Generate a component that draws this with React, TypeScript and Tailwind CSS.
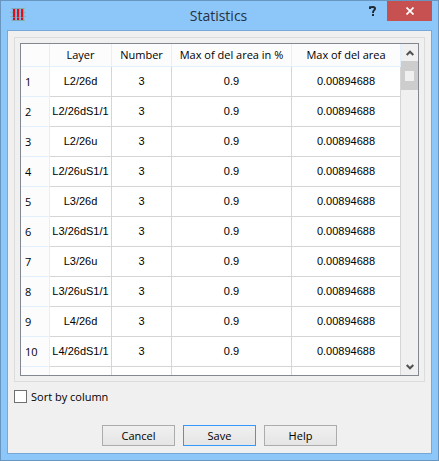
import { useState } from "react";

const columns = ["Layer", "Number", "Max of del area in %", "Max of del area"];

const layers = [
  "L2/26d",
  "L2/26dS1/1",
  "L2/26u",
  "L2/26uS1/1",
  "L3/26d",
  "L3/26dS1/1",
  "L3/26u",
  "L3/26uS1/1",
  "L4/26d",
  "L4/26dS1/1",
];

const rows = layers.map((layer) => ({
  layer,
  number: "3",
  percent: "0.9",
  area: "0.00894688",
}));

const cell = "border-r border-b border-[#d5d5d5] p-0 pb-px text-center";
const headCell = "border-r border-b border-[#e2effc] bg-[#fcfcfd] p-0 font-normal";
const button =
  "h-[21px] w-[73px] border bg-linear-to-b from-[#f0f0f0] to-[#e5e5e5] text-center leading-4";

function AppIcon() {
  return (
    <svg className="h-4 w-4" viewBox="0 0 16 16" aria-hidden="true">
      <path d="M2 1h12v13H2z" fill="#7fa6cf" opacity=".55" />
      <path d="M1 1.5h14M0 5.5h16M0 9.5h16M1 13.5h14" stroke="#7ea88f" opacity=".6" />
      <path d="M1.5 0v15M14.5 0v15" stroke="#8fc0c0" opacity=".6" />
      <path d="M5 2h1v11H5zM9 2h1v11H9zM13 2h1v11h-1z" fill="#8494bd" opacity=".8" />
      <path d="M3 2h2v8H3zM7 2h2v8H7zM11 2h2v8h-2z" fill="#dc101c" />
      <path d="M3 10h2v1H3zM7 10h2v1H7zM11 10h2v1h-2z" fill="#a8667f" />
      <path d="M3 11h2v2H3zM7 11h2v2H7zM11 11h2v2h-2z" fill="#c8101f" />
    </svg>
  );
}

function TitleBar() {
  return (
    <header className="flex h-[29px] shrink-0 items-start justify-between pr-[6px] pl-[9px]">
      <div className="flex w-[68px] pt-[6px]">
        <AppIcon />
      </div>
      <h1 className="text-[14px] leading-[29px] text-[#26323c]">Statistics</h1>
      <div className="flex">
        <button type="button" aria-label="What's this?" className="flex h-5 w-7 items-center justify-center pl-px">
          <svg className="h-3 w-2" viewBox="0 0 8 12" fill="none" aria-hidden="true">
            <path d="M1 4V2.2Q2 2 4 2Q6 2 6 3.6Q6 4.6 5 5.3Q4 6 4 8" stroke="#1f2a33" strokeWidth="2" />
            <path d="M3 9h2v2H3z" fill="#1f2a33" />
          </svg>
        </button>
        <button type="button" aria-label="Close" className="flex h-5 w-[45px] items-center justify-center bg-[#c75050] pl-px">
          <svg className="h-2 w-2" viewBox="0 0 8 8" aria-hidden="true">
            <path d="M.5.5l7 7M7.5.5l-7 7" stroke="#fff" strokeWidth="1.7" />
          </svg>
        </button>
      </div>
    </header>
  );
}

function ScrollBar() {
  return (
    <div className="flex w-[17px] shrink-0 flex-col bg-[#f0f0f0]">
      <button type="button" aria-label="Scroll up" className="flex h-[17px] items-center justify-center">
        <svg className="h-[6px] w-2" viewBox="0 0 8 6" fill="none" aria-hidden="true">
          <path d="M.7 5L4 1.7L7.3 5" stroke="#505050" strokeWidth="2" />
        </svg>
      </button>
      <div className="flex h-[29px] items-center justify-center bg-[#cdcdcd]">
        <span className="h-[10px] w-[9px] bg-[#f0f0f0]" />
      </div>
      <button type="button" aria-label="Scroll down" className="mt-auto flex h-[17px] items-center justify-center">
        <svg className="h-[6px] w-2" viewBox="0 0 8 6" fill="none" aria-hidden="true">
          <path d="M.7 1L4 4.3L7.3 1" stroke="#505050" strokeWidth="2" />
        </svg>
      </button>
    </div>
  );
}

function StatisticsTable() {
  return (
    <table className="w-full table-fixed border-separate border-spacing-0">
      <colgroup>
        <col className="w-[29px]" />
        <col className="w-[62px]" />
        <col className="w-[60px]" />
        <col className="w-[120px]" />
        <col />
      </colgroup>
      <thead>
        <tr className="h-[23px]">
          <td className={headCell} />
          {columns.map((name) => (
            <th key={name} scope="col" className={`${headCell} whitespace-nowrap`}>
              {name}
            </th>
          ))}
        </tr>
      </thead>
      <tbody className="font-['Liberation_Sans',Arial,sans-serif]">
        {rows.map((row, i) => (
          <tr key={row.layer} className="h-[30px]">
            <th scope="row" className={`${headCell} pl-1 text-left font-['Open_Sans',sans-serif]`}>
              {i + 1}
            </th>
            <td className={cell}>{row.layer}</td>
            <td className={cell}>{row.number}</td>
            <td className={cell}>{row.percent}</td>
            <td className={cell}>{row.area}</td>
          </tr>
        ))}
        <tr className="h-[30px]">
          <td className={headCell} />
          <td className={cell} />
          <td className={cell} />
          <td className={cell} />
          <td className={cell} />
        </tr>
      </tbody>
    </table>
  );
}

export default function App() {
  const [sorted, setSorted] = useState(false);

  return (
    <div className="flex h-screen flex-col border border-[#6996c0] bg-[#8dc6f9] font-['Open_Sans',sans-serif] text-[11px] leading-4 text-black">
      <TitleBar />
      <main className="mx-[6px] mb-[6px] flex min-h-0 flex-1 flex-col border border-[#76a9d8] bg-[#f0f0f0] px-[6px] pt-[6px] pb-[7px]">
        <div className="flex min-h-0 flex-1 border border-[#dcdcdc] p-[5px]">
          <div className="flex min-h-0 flex-1 border border-[#828790] bg-white">
            <div className="min-w-0 flex-1 overflow-hidden">
              <StatisticsTable />
            </div>
            <ScrollBar />
          </div>
        </div>
        <label className="mt-2 flex h-[13px] items-center gap-1 self-start">
          <input
            type="checkbox"
            checked={sorted}
            onChange={(e) => setSorted(e.target.checked)}
            className="h-[13px] w-[13px] appearance-none border border-[#707070] bg-white checked:bg-[#707070]"
          />
          Sort by column
        </label>
        <div className="mt-[22px] flex justify-center gap-2">
          <button type="button" className={`${button} border-[#acacac]`}>
            Cancel
          </button>
          <button type="button" className={`${button} border-[#3399ff]`}>
            Save
          </button>
          <button type="button" className={`${button} border-[#acacac]`}>
            Help
          </button>
        </div>
      </main>
    </div>
  );
}
